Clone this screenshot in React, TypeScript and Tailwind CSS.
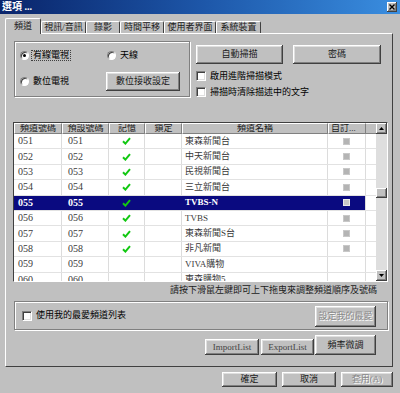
import React from "react";

const raised =
  "bg-[#c0c0c0] shadow-[inset_-1px_-1px_0_#404040,inset_1px_1px_0_#ffffff,inset_-2px_-2px_0_#808080,inset_2px_2px_0_#dfdfdf]";
const thinRaised =
  "bg-[#c0c0c0] shadow-[inset_-1px_-1px_0_#404040,inset_1px_1px_0_#ffffff,inset_-2px_-2px_0_#808080]";
const etched = "border border-[#808080] shadow-[1px_1px_0_#ffffff,inset_1px_1px_0_#ffffff]";
const disabledText = "text-[#8a8a8a] [text-shadow:1px_1px_0_#ffffff]";

type Row = {
  ch: string;
  preset: string;
  saved: boolean;
  name: string;
  custom: boolean;
  selected?: boolean;
};

const rows: Row[] = [
  { ch: "051", preset: "051", saved: true, name: "東森新聞台", custom: true },
  { ch: "052", preset: "052", saved: true, name: "中天新聞台", custom: true },
  { ch: "053", preset: "053", saved: true, name: "民視新聞台", custom: true },
  { ch: "054", preset: "054", saved: true, name: "三立新聞台", custom: true },
  { ch: "055", preset: "055", saved: true, name: "TVBS-N", custom: true, selected: true },
  { ch: "056", preset: "056", saved: true, name: "TVBS", custom: true },
  { ch: "057", preset: "057", saved: true, name: "東森新聞S台", custom: true },
  { ch: "058", preset: "058", saved: true, name: "非凡新聞", custom: true },
  { ch: "059", preset: "059", saved: false, name: "VIVA購物", custom: false },
  { ch: "060", preset: "060", saved: false, name: "東森購物5", custom: false },
];

const tabs = [
  { label: "頻道", w: "w-[36px]" },
  { label: "視訊/音訊", w: "w-[45px]" },
  { label: "錄影", w: "w-[34px]" },
  { label: "時間平移", w: "w-[44px]" },
  { label: "使用者界面", w: "w-[52px]" },
  { label: "系統裝置", w: "w-[45px]" },
];

function Btn({
  className,
  children,
  disabled,
}: {
  className: string;
  children: React.ReactNode;
  disabled?: boolean;
}) {
  return (
    <div
      className={`${raised} ${className} flex items-center justify-center ${
        disabled ? disabledText : "text-[#1a1a1a]"
      }`}
    >
      {children}
    </div>
  );
}

function Check() {
  return (
    <div className="w-[10px] h-[10px] bg-white border border-[#808080] border-r-white border-b-white shadow-[inset_1px_1px_0_#404040,inset_-1px_-1px_0_#dfdfdf] shrink-0" />
  );
}

function Radio({ on }: { on?: boolean }) {
  return (
    <div className="w-[9px] h-[9px] rounded-full bg-white border border-[#808080] border-r-white border-b-white shadow-[inset_1px_1px_0_#404040] flex items-center justify-center shrink-0">
      {on && <div className="w-[3px] h-[3px] rounded-full bg-black" />}
    </div>
  );
}

function Tick() {
  return (
    <svg width="9" height="8" viewBox="0 0 9 8">
      <path d="M1 4.2 L3.4 6.6 L8 1.2" fill="none" stroke="#12c812" strokeWidth="2" />
    </svg>
  );
}

function Arrow({ up }: { up?: boolean }) {
  return (
    <svg width="5" height="3" viewBox="0 0 5 3">
      <path d={up ? "M2.5 0 L5 3 L0 3 Z" : "M0 0 L5 0 L2.5 3 Z"} fill="#000" />
    </svg>
  );
}

const headCell =
  "h-full flex items-center border-l border-t border-white border-r border-b border-r-[#808080] border-b-[#808080] text-[#1a1a1a] overflow-hidden whitespace-nowrap";

export default function App() {
  return (
    <div className="w-[400px] h-[393px] bg-[#c0c0c0] overflow-hidden font-['Liberation_Serif','Noto_Sans_CJK_TC',serif] text-[9px] leading-none select-none">
      {/* title bar */}
      <div className="h-[14px] flex items-center justify-between pl-[2px] pr-[3px] bg-linear-to-r from-[#0a246a] via-[#1d56a8] to-[#3a8ee0]">
        <span className="text-white font-bold text-[10px]">選項 ...</span>
        <div className={`${thinRaised} w-[10px] h-[10px] flex items-center justify-center`}>
          <svg width="6" height="6" viewBox="0 0 6 6">
            <path d="M0.5 0.5 L5.5 5.5 M5.5 0.5 L0.5 5.5" stroke="#000" strokeWidth="1.4" />
          </svg>
        </div>
      </div>

      {/* tabs */}
      <div className="mt-[4px] pl-[5px] h-[16px] flex items-end relative z-10">
        {tabs.map((t, i) =>
          i === 0 ? (
            <div
              key={t.label}
              className={`${t.w} h-[16px] bg-[#c0c0c0] border-l border-t border-white border-r border-r-[#404040] rounded-t-[2px] flex items-center justify-center text-[#1a1a1a]`}
            >
              {t.label}
            </div>
          ) : (
            <div
              key={t.label}
              className={`${t.w} h-[12px] mb-[1px] border-l border-t border-white border-r border-r-[#404040] rounded-t-[2px] flex items-center justify-center text-[#1a1a1a] whitespace-nowrap`}
            >
              {t.label}
            </div>
          )
        )}
      </div>

      {/* panel */}
      <div className="-mt-[1px] ml-[5px] w-[388px] h-[334px] border-l border-t border-white border-r border-b border-r-[#404040] border-b-[#404040] pl-[8px] pt-[7px]">
        {/* top section */}
        <div className="flex h-[56px]">
          <div className={`${etched} w-[176px] h-[56px] pl-[5px]`}>
            <div className="mt-[6px] h-[14px] flex items-center">
              <div className="w-[86px] flex items-center gap-[3px]">
                <Radio on />
                <span className="px-[1px] outline outline-1 outline-dotted outline-[#404040]">有線電視</span>
              </div>
              <div className="ml-[1px] flex items-center gap-[4px]">
                <Radio />
                <span>天線</span>
              </div>
            </div>
            <div className="mt-[10px] h-[19px] flex items-center">
              <div className="w-[86px] flex items-center gap-[4px]">
                <Radio />
                <span>數位電視</span>
              </div>
              <Btn className="w-[74px] h-[19px]">數位接收設定</Btn>
            </div>
          </div>

          <div className="ml-[6px] flex flex-col">
            <div className="mt-[4px] flex gap-[10px]">
              <Btn className="w-[87px] h-[19px]">自動掃描</Btn>
              <Btn className="w-[88px] h-[19px]">密碼</Btn>
            </div>
            <div className="mt-[7px] h-[11px] flex items-center gap-[4px]">
              <Check />
              <span>啟用進階掃描模式</span>
            </div>
            <div className="mt-[6px] h-[11px] flex items-center gap-[4px]">
              <Check />
              <span>掃描時清除描述中的文字</span>
            </div>
          </div>
        </div>

        {/* channel table */}
        <div className="mt-[25px] -ml-[1px] w-[375px] h-[160px] border border-[#404040] border-r-white border-b-white flex bg-white">
          <div className="w-[362px] h-full flex flex-col">
            <div className="h-[11px] flex bg-[#c0c0c0] shrink-0">
              <div className={`${headCell} w-[48px] justify-center`}>頻道號碼</div>
              <div className={`${headCell} w-[47px] justify-center`}>預設號碼</div>
              <div className={`${headCell} w-[36px] justify-center`}>記憶</div>
              <div className={`${headCell} w-[37px] justify-center`}>鎖定</div>
              <div className={`${headCell} w-[146px] justify-center`}>頻道名稱</div>
              <div className={`${headCell} w-[38px] pl-[2px]`}>自訂...</div>
              <div className="w-[10px] h-full border-t border-white border-b border-b-[#808080]" />
            </div>
            <div className="flex-1 overflow-hidden text-[#3a3a3a]">
              {rows.map((r) => {
                const sel = r.selected;
                const cell = `h-full flex items-center border-r ${
                  sel ? "bg-[#0a0a80] text-white border-[#0a0a80]" : "border-[#dcdcdc]"
                }`;
                return (
                  <div key={r.ch} className="h-[15.4px] flex border-b border-[#e2e2e2]">
                    <div className={`${cell} w-[48px] pl-[4px] text-[10px] ${sel ? "font-bold" : ""}`}>{r.ch}</div>
                    <div className={`${cell} w-[47px] pl-[6px] text-[10px] ${sel ? "font-bold" : ""}`}>{r.preset}</div>
                    <div className={`${cell} w-[36px] justify-center`}>{r.saved && <Tick />}</div>
                    <div className={`${cell} w-[37px]`} />
                    <div className={`${cell} w-[146px] pl-[3px] ${sel ? "font-bold" : ""}`}>{r.name}</div>
                    <div className={`h-full flex items-center justify-center w-[38px] border-r border-[#dcdcdc] ${sel ? "bg-[#0a0a80]" : ""}`}>
                      {r.custom && (
                        <div
                          className={`w-[7px] h-[7px] ${
                            sel ? "bg-[#c8c8c8] border border-[#e8e8e8]" : "bg-[#b4b4b4] border border-[#c8c8c8]"
                          }`}
                        />
                      )}
                    </div>
                    <div className="w-[10px] h-full" />
                  </div>
                );
              })}
            </div>
          </div>
          {/* scrollbar */}
          <div className="w-[11px] h-full flex flex-col bg-[#dedede]">
            <div className={`${thinRaised} h-[11px] flex items-center justify-center shrink-0`}>
              <Arrow up />
            </div>
            <div className="h-[54px] shrink-0" />
            <div className={`${thinRaised} h-[10px] shrink-0`} />
            <div className="flex-1" />
            <div className={`${thinRaised} h-[11px] flex items-center justify-center shrink-0`}>
              <Arrow />
            </div>
          </div>
        </div>

        {/* hint */}
        <div className="-ml-[1px] w-[375px] h-[16px] flex items-center justify-end pr-[11px] text-[#1a1a1a]">
          請按下滑鼠左鍵即可上下拖曳來調整頻道順序及號碼
        </div>

        {/* favourites group */}
        <div className={`${etched} mt-[3px] w-[374px] h-[29px] flex items-center pl-[7px] pr-[11px]`}>
          <Check />
          <span className="ml-[4px]">使用我的最愛頻道列表</span>
          <div className="flex-1" />
          <Btn className="w-[61px] h-[21px] mt-[1px]" disabled>
            設定我的最愛
          </Btn>
        </div>

        {/* list buttons */}
        <div className="mt-[5px] w-[374px] h-[20px] flex items-end justify-end pr-[12px]">
          <Btn className="w-[54px] h-[16px] !text-[#444]">ImportList</Btn>
          <Btn className="ml-[2px] w-[53px] h-[16px] !text-[#444]">ExportList</Btn>
          <Btn className="ml-[1px] w-[61px] h-[20px]">頻率微調</Btn>
        </div>
      </div>

      {/* dialog buttons */}
      <div className="mt-[5px] h-[15px] flex justify-end pr-[7px] gap-[5px]">
        <Btn className="w-[55px] h-[15px]">確定</Btn>
        <Btn className="w-[54px] h-[15px]">取消</Btn>
        <Btn className="w-[52px] h-[15px]" disabled>
          套用(A)
        </Btn>
      </div>
    </div>
  );
}
